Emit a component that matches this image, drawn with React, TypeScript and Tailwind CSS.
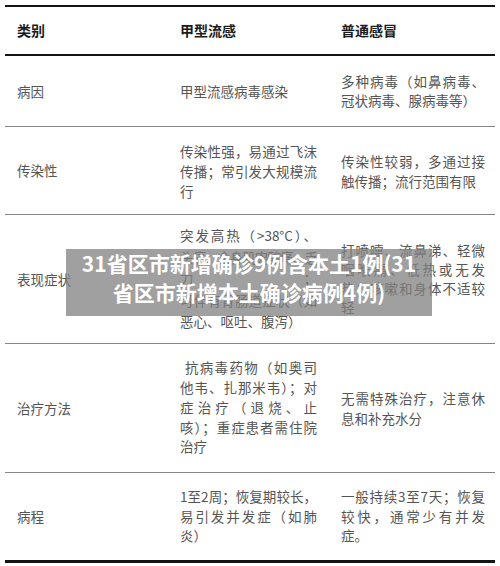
const cjk = { fontFamily: '"Noto Sans CJK SC", "Noto Sans", sans-serif' };

type Row = {
  label: string;
  a: string[];
  b: string[];
  h: string;
  leadA?: string;
  leadB?: string;
};

const rows: Row[] = [
  {
    label: "病因",
    a: ["甲型流感病毒感染"],
    b: ["多种病毒（如鼻病毒、", "冠状病毒、腺病毒等）"],
    h: "h-[70px]",
    leadB: "leading-[19px]",
  },
  {
    label: "传染性",
    a: ["传染性强，易通过飞沫", "传播；常引发大规模流", "行"],
    b: ["传染性较弱，多通过接", "触传播；流行范围有限"],
    h: "h-[87px]",
  },
  {
    label: "表现症状",
    a: [
      "突发高热（>38°C）、",
      "头痛、全身肌肉酸痛、乏",
      "力；",
      "可伴有胃肠道症状（如",
      "恶心、呕吐、腹泻）",
    ],
    b: ["打喷嚏、流鼻涕、轻微", "咽喉痛、低热或无发", "热；咳嗽和身体不适较", "轻"],
    h: "h-[127.5px]",
    leadA: "leading-[21.5px]",
    leadB: "leading-[19px]",
  },
  {
    label: "治疗方法",
    a: [" 抗病毒药物（如奥司", "他韦、扎那米韦）；对", "症治疗（退烧、止", "咳）；重症患者需住院", "治疗"],
    b: ["无需特殊治疗，注意休", "息和补充水分"],
    h: "h-[128.5px]",
    leadA: "leading-[19.75px]",
  },
  {
    label: "病程",
    a: ["1至2周；恢复期较长，", "易引发并发症（如肺", "炎）"],
    b: ["一般持续3至7天；恢复", "较快，通常少有并发", "症。"],
    h: "h-[87px]",
    leadA: "leading-[19.5px]",
    leadB: "leading-[19.5px]",
  },
];

function Lines({ lines, lead }: { lines: string[]; lead?: string }) {
  return (
    <div className={`text-[13.5px] text-[#555] ${lead ?? "leading-5"}`}>
      {lines.map((l, i) => {
        const last = i === lines.length - 1;
        const tight = l.length > 10 && !/[0-9]/.test(l);
        return (
          <div
            key={i}
            className={`whitespace-nowrap ${last ? "text-left" : "text-justify [text-align-last:justify]"} ${
              tight ? "tracking-[-1.1px]" : ""
            } ${l.startsWith(" ") ? "pl-[5px]" : ""}`}
          >
            {l.trim()}
          </div>
        );
      })}
    </div>
  );
}

export default function App() {
  return (
    <div className="relative w-[500px] h-[566px] bg-white overflow-hidden" style={cjk}>
      <div className="absolute left-[5px] right-[5px] top-[5px]">
        <div className="border-t-[2.5px] border-b-[2.5px] border-[#141414] grid grid-cols-[163px_161px_166px] h-[51px] items-center text-[14px] font-bold text-[#1c1c1c]">
          <div className="pl-3">类别</div>
          <div className="pl-3">甲型流感</div>
          <div className="pl-3">普通感冒</div>
        </div>
        {rows.map((r, i) => (
          <div
            key={r.label}
            className={`grid grid-cols-[163px_161px_166px] items-center ${r.h} ${
              i === rows.length - 1 ? "border-b-[3px] border-[#141414] box-content" : "border-b-[1.5px] border-[#858585] box-content"
            }`}
          >
            <div className="pl-3 text-[13.5px] text-[#555]">{r.label}</div>
            <div className="pl-3 pr-3">
              <Lines lines={r.a} lead={r.leadA} />
            </div>
            <div className="pl-3 pr-[10px]">
              <Lines lines={r.b} lead={r.leadB} />
            </div>
          </div>
        ))}
      </div>
      <div className="absolute left-[66px] top-[249px] w-[366px] h-[67px] bg-[rgba(128,128,128,0.75)] text-white font-bold text-[21px] leading-[29px] text-center">
        <div>31省区市新增确诊9例含本土1例(31</div>
        <div>省区市新增本土确诊病例4例)</div>
      </div>
    </div>
  );
}
